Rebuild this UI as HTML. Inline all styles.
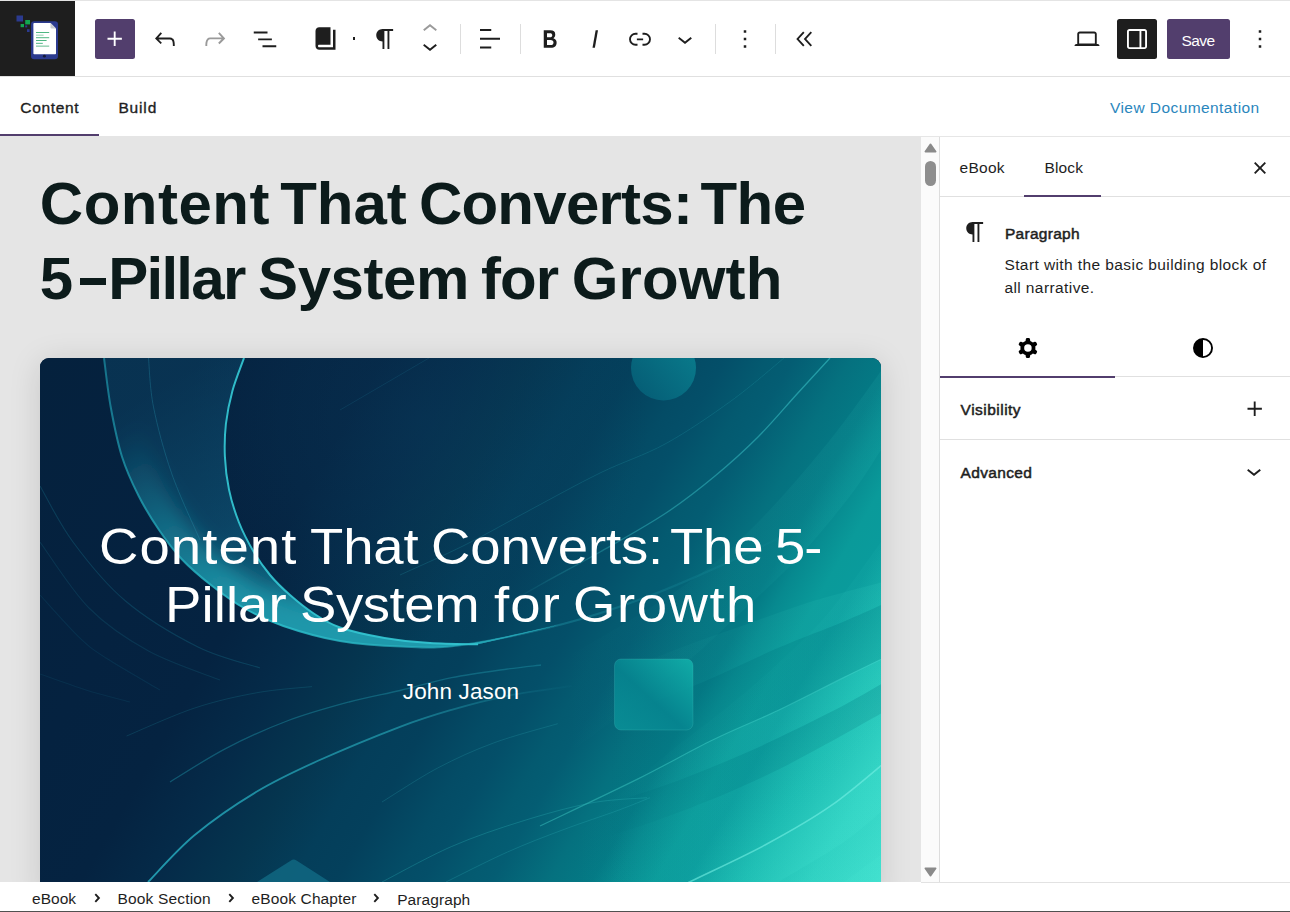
<!DOCTYPE html>
<html lang="en">
<head>
<meta charset="utf-8">
<title>eBook Editor</title>
<style>
*{box-sizing:border-box;margin:0;padding:0}
html,body{width:1290px;height:912px;overflow:hidden;background:#fff;font-family:"Liberation Sans",sans-serif;color:#1e1e1e}
.abs{position:absolute}
.t{position:absolute;white-space:nowrap;line-height:1;font-size:15.5px;color:#1e1e1e}
svg{position:absolute;display:block;overflow:visible}
.ic{width:30px;height:30px;fill:#1e1e1e}
.sep{position:absolute;top:24px;width:1px;height:30px;background:#ddd}

/* header */
#topline{left:0;top:0;width:1290px;height:1px;background:#e4e4e4}
#logo{left:0;top:1px;width:75px;height:75px;background:#1e1e1e}
#hborder{left:0;top:76px;width:1290px;height:1px;background:#e0e0e0}
#add{left:95px;top:19px;width:40px;height:40px;border-radius:2.5px;background:#523e6d}
#sbtn{left:1117px;top:19px;width:40px;height:40px;border-radius:2.5px;background:#1e1e1e}
#save{left:1167px;top:19px;width:63px;height:40px;border-radius:2.5px;background:#523e6d}

/* tabs row */
#tabline{left:0;top:133.800px;width:99px;height:2.400px;background:#523e6d}

/* canvas */
#canvas{left:0;top:136px;width:921px;height:746px;background:#e5e5e5;overflow:hidden}
#sideTop{left:921px;top:136px;width:369px;height:1px;background:#e6e6e6}
#scroll{left:921px;top:137px;width:18px;height:745px;background:#fbfbfb}
#sborder{left:939px;top:137px;width:1px;height:745px;background:#ddd}

/* bottom */
#bottom{left:0;top:882px;width:1290px;height:30px;background:#fff}
#bline{left:0;top:910.8px;width:1290px;height:1.2px;background:#505050}
#btop{left:921px;top:882px;width:369px;height:1px;background:#e2e2e2}
</style>
</head>
<body>

<!-- ============ HEADER ============ -->
<div class="abs" id="topline"></div>
<div class="abs" id="logo"></div>
<div class="abs" id="hborder"></div>
<div class="abs" id="add"></div>
<div class="abs" id="sbtn"></div>
<div class="abs" id="save"></div>

<!-- logo -->
<svg style="left:0;top:1px" width="75" height="75" viewBox="0 0 75 75">
  <rect x="16.5" y="14.5" width="6.5" height="6" fill="#2b3a8f"/>
  <rect x="25.2" y="19" width="4.8" height="4.4" fill="#12a650"/>
  <rect x="20.6" y="23" width="3.4" height="3.2" fill="#12a650"/>
  <rect x="25.2" y="24.4" width="2" height="2" fill="#2b3a8f"/>
  <rect x="27" y="28.2" width="2.6" height="2.8" fill="#2b3a8f"/>
  <rect x="31" y="20.3" width="27" height="38" rx="3.2" fill="#2b3a8f"/>
  <path d="M34.2 22h16.3l5.5 5.5v24.9a.8.8 0 0 1-.8.8H34.2a.8.8 0 0 1-.8-.8V22.8a.8.8 0 0 1 .8-.8z" fill="#fff"/>
  <path d="M50.5 22l5.5 5.5h-4.3a1.2 1.2 0 0 1-1.2-1.2z" fill="#c9ccd1"/>
  <rect x="36" y="31" width="13.2" height="1" fill="#4fb783"/>
  <rect x="36" y="33.6" width="7.6" height="1.2" fill="#a9d9c0"/>
  <rect x="36" y="36.2" width="13.2" height="1" fill="#4fb783"/>
  <rect x="36" y="39" width="10.6" height="1" fill="#4fb783"/>
  <rect x="36" y="41.8" width="6.8" height="1.2" fill="#6cc29a"/>
  <rect x="36" y="44.4" width="13.2" height="1.6" fill="#9fd5b9"/>
  <ellipse cx="44.400" cy="55.200" rx="1.500" ry="1.400" fill="#151a3a"/>
</svg>

<!-- inserter plus -->
<svg class="ic" style="left:100px;top:24px;fill:#fff" viewBox="0 0 24 24"><path d="M11 12.5V17.5H12.5V12.5H17.5V11H12.5V6H11V11H6V12.5H11Z"/></svg>
<!-- undo -->
<svg class="ic" style="left:150px;top:24px" viewBox="0 0 24 24"><path d="M18.3 11.7c-.6-.6-1.4-.9-2.3-.9H6.7l2.900-3.300-1.100-1-4.500 5L8.500 16l1-1-2.700-2.700H16c.5 0 .9.2 1.300.5 1 1 1 3.400 1 4.500v.3h1.500v-.2c0-1.500 0-4.300-1.400-5.700z"/></svg>
<!-- redo -->
<svg class="ic" style="left:200px;top:24px;fill:#9a9a9a" viewBox="0 0 24 24"><path d="M15.600 6.500l-1.100 1 2.900 3.300H8c-.9 0-1.700.3-2.300.9-1.400 1.500-1.400 4.200-1.400 5.600v.2h1.500v-.3c0-1.100 0-3.500 1-4.500.3-.3.700-.5 1.300-.5h9.200L14.500 15l1.100 1.100 4.600-4.600-4.600-5z"/></svg>
<!-- list view -->
<svg class="ic" style="left:250px;top:24px" viewBox="0 0 24 24"><path d="M3 6h11v1.500H3V6Zm3.500 5.500h11V13h-11v-1.500ZM21 17H10v1.500h11V17Z"/></svg>
<!-- book (dashicon) -->
<svg style="left:312.500px;top:25.500px;fill:#1e1e1e" width="25" height="25" viewBox="0 0 20 20"><path d="M16 3h2v16H5c-1.660 0-3-1.340-3-3V4c0-1.660 1.340-3 3-3h9v14H5c-.550 0-1 .450-1 1s.450 1 1 1h11V3z"/></svg>
<div class="abs" style="left:353px;top:37px;width:2px;height:3px;background:#1e1e1e"></div>
<!-- pilcrow -->
<svg class="ic" style="left:369.500px;top:24px" viewBox="0 0 24 24"><path d="m9.996 14v-.225l.004 0v6.225h1.500v-14.500h2.500v14.500h1.500v-14.500h3v-1.500h-8.504c-2.761 0-5 2.239-5 5 0 2.761 2.239 5 5 5z"/></svg>
<!-- movers -->
<svg class="ic" style="left:415px;top:14.300px;fill:#9a9a9a" viewBox="0 0 24 24"><path d="M6.500 12.400L12 8l5.500 4.400-.9 1.200L12 10l-4.500 3.600-1-1.200z"/></svg>
<svg class="ic" style="left:415px;top:31.200px" viewBox="0 0 24 24"><path d="M17.500 11.600L12 16l-5.500-4.400.9-1.200L12 14l4.500-3.600 1 1.200z"/></svg>
<div class="sep" style="left:460px"></div>
<!-- align left -->
<svg class="ic" style="left:475px;top:24px" viewBox="0 0 24 24"><path d="M13 5.500H4V4h9v1.500Zm7 7H4V11h16v1.500Zm-7 7H4V18h9v1.500Z"/></svg>
<div class="sep" style="left:520px"></div>
<!-- bold -->
<svg class="ic" style="left:534.500px;top:24px" viewBox="0 0 24 24"><path d="M14.700 11.300c1-.6 1.500-1.600 1.500-3 0-2.300-1.300-3.400-4-3.400H7v14h5.800c1.400 0 2.500-.3 3.300-1 .8-.7 1.200-1.700 1.200-2.900.1-1.900-.8-3.100-2.600-3.700zm-5.100-4h2.300c.6 0 1.100.1 1.400.4.300.3.500.7.500 1.200s-.2 1-.5 1.200c-.3.3-.8.400-1.400.4H9.600V7.300zm4.600 9c-.4.300-1 .4-1.700.4H9.600v-3.900h2.900c.7 0 1.300.2 1.700.5.400.3.600.9.600 1.500s-.2 1.200-.6 1.500z"/></svg>
<!-- italic -->
<svg class="ic" style="left:579.700px;top:24px" viewBox="0 0 24 24"><path d="M12.500 5L10 19h1.900l2.500-14z"/></svg>
<!-- link -->
<svg class="ic" style="left:624.800px;top:24px" viewBox="0 0 24 24"><path d="M10 17.389H8.444A5.194 5.194 0 1 1 8.444 7H10v1.500H8.444a3.694 3.694 0 0 0 0 7.389H10v1.500ZM14 7h1.556a5.194 5.194 0 0 1 0 10.390H14v-1.500h1.556a3.694 3.694 0 0 0 0-7.390H14V7Zm-4.500 6h5v-1.500h-5V13Z"/></svg>
<!-- chevron down -->
<svg class="ic" style="left:669.900px;top:23.800px" viewBox="0 0 24 24"><path d="M17.500 11.600L12 16l-5.500-4.400.9-1.200L12 14l4.500-3.600 1 1.200z"/></svg>
<div class="sep" style="left:715px"></div>
<!-- more -->
<svg class="ic" style="left:729.700px;top:24px" viewBox="0 0 24 24"><path d="M13 19h-2v-2h2v2zm0-6h-2v-2h2v2zm0-6h-2V5h2v2z"/></svg>
<div class="sep" style="left:775px"></div>
<!-- collapse -->
<svg class="ic" style="left:790px;top:24px" viewBox="0 0 24 24"><path d="M11.600 7l-1.100-1L5 12l5.500 6 1.100-1L7 12l4.600-5zm6 0l-1.100-1-5.500 6 5.500 6 1.100-1-4.600-5 4.600-5z"/></svg>

<!-- laptop -->
<svg class="ic" style="left:1072.400px;top:24px" viewBox="0 0 24 24"><path d="M20.500 16h-.7V8c0-1.100-.9-2-2-2H6.200c-1.100 0-2 .9-2 2v8h-.7c-.8 0-1.500.7-1.500 1.500h20c0-.8-.7-1.500-1.500-1.500zM5.700 8c0-.3.200-.5.500-.5h11.600c.3 0 .5.200.5.500v7.600H5.700V8z"/></svg>
<!-- drawer right -->
<svg class="ic" style="left:1122px;top:24px;fill:#fff" viewBox="0 0 24 24"><path d="M18 4H6c-1.100 0-2 .9-2 2v12c0 1.100.9 2 2 2h12c1.100 0 2-.9 2-2V6c0-1.100-.9-2-2-2zm-4 14.500H6c-.3 0-.5-.2-.5-.5V6c0-.3.200-.5.500-.5h8v13zm4.500-.5c0 .3-.2.5-.5.5h-2.500V5.500H18c.3 0 .5.200.5.500v12z"/></svg>
<span class="t" id="tSave" style="left:1181.4px;top:32.8px;color:#fff;letter-spacing:-.5px">Save</span>
<svg class="ic" style="left:1245px;top:24px" viewBox="0 0 24 24"><path d="M13 19h-2v-2h2v2zm0-6h-2v-2h2v2zm0-6h-2V5h2v2z"/></svg>

<!-- ============ TABS ============ -->
<div class="abs" id="tabline"></div>

<span class="t" id="tContent" style="left:20.3px;top:99.8px;letter-spacing:.68px;-webkit-text-stroke:.35px #1e1e1e">Content</span>
<span class="t" id="tBuild" style="left:118.4px;top:99.8px;letter-spacing:.85px;-webkit-text-stroke:.35px #1e1e1e">Build</span>
<span class="t" id="tDoc" style="left:1110px;top:99.5px;letter-spacing:.43px;color:#2a86bd">View Documentation</span>

<!-- ============ CANVAS ============ -->
<div class="abs" id="canvas">
  <span class="t" id="h1a0" style="left:39.8px;top:38.300px;font-size:60px;font-weight:700;color:#0c1b1b;letter-spacing:0.5px">Content</span>
  <span class="t" id="h1a1" style="left:280.2px;top:38.300px;font-size:60px;font-weight:700;color:#0c1b1b;letter-spacing:-0.03px">That</span>
  <span class="t" id="h1a2" style="left:418.9px;top:38.300px;font-size:60px;font-weight:700;color:#0c1b1b;letter-spacing:-0.75px">Converts:</span>
  <span class="t" id="h1a3" style="left:700.5px;top:38.300px;font-size:60px;font-weight:700;color:#0c1b1b;letter-spacing:-0.55px">The</span>
  <span class="t" id="h1b0" style="left:39.8px;top:112.600px;font-size:60px;font-weight:700;color:#0c1b1b;letter-spacing:0px">5</span>
  <span class="t" id="h1b1" style="left:108.2px;top:112.600px;font-size:60px;font-weight:700;color:#0c1b1b;letter-spacing:-1.74px">Pillar</span>
  <span class="t" id="h1b2" style="left:258.1px;top:112.600px;font-size:60px;font-weight:700;color:#0c1b1b;letter-spacing:-0.46px">System</span>
  <span class="t" id="h1b3" style="left:480.9px;top:112.600px;font-size:60px;font-weight:700;color:#0c1b1b;letter-spacing:-0.85px">for</span>
  <span class="t" id="h1b4" style="left:571.7px;top:112.600px;font-size:60px;font-weight:700;color:#0c1b1b;letter-spacing:0.14px">Growth</span>
  <div class="abs" style="left:79.600px;top:142.400px;width:26.400px;height:7px;background:#0c1b1b"></div>
  <div class="abs" id="cover" style="left:40px;top:222px;width:841px;height:540px;border-radius:9px 9px 0 0;overflow:hidden;background:#05213d;box-shadow:0 4px 32px rgba(0,0,0,.13)">
    <svg id="art" width="841" height="540" viewBox="0 0 841 540" style="left:0;top:0"><defs>
<linearGradient id="bg" gradientUnits="userSpaceOnUse" x1="40" y1="358" x2="897" y2="853"><stop offset="0" stop-color="#05213d"/><stop offset="0.2" stop-color="#052240"/><stop offset="0.3" stop-color="#052341"/><stop offset="0.37" stop-color="#052b49"/><stop offset="0.43" stop-color="#05354f"/><stop offset="0.485" stop-color="#043e5a"/><stop offset="0.523" stop-color="#04405c"/><stop offset="0.574" stop-color="#044c66"/><stop offset="0.6" stop-color="#044f69"/><stop offset="0.637" stop-color="#045a70"/><stop offset="0.66" stop-color="#045d73"/><stop offset="0.71" stop-color="#05717f"/><stop offset="0.747" stop-color="#047a85"/><stop offset="0.768" stop-color="#07898f"/><stop offset="0.802" stop-color="#0a9a9a"/><stop offset="0.83" stop-color="#0a9b9c"/><stop offset="0.88" stop-color="#19b8af"/><stop offset="0.938" stop-color="#2fd0c1"/><stop offset="0.99" stop-color="#3ddccb"/><stop offset="1" stop-color="#40dfcd"/></linearGradient>
<linearGradient id="cres" gradientUnits="userSpaceOnUse" x1="170" y1="380" x2="330" y2="640">
<stop offset="0" stop-color="#0d4a6c" stop-opacity=".42"/><stop offset=".5" stop-color="#0f5a7c" stop-opacity=".6"/>
<stop offset=".72" stop-color="#12708c" stop-opacity=".7"/><stop offset=".88" stop-color="#178aa0" stop-opacity=".9"/><stop offset="1" stop-color="#1c96aa" stop-opacity=".95"/>
</linearGradient>
<linearGradient id="outl" gradientUnits="userSpaceOnUse" x1="104" y1="358" x2="800" y2="560">
<stop offset="0" stop-color="#1a8aa0" stop-opacity=".75"/><stop offset=".3" stop-color="#2bbcc9" stop-opacity=".95"/><stop offset=".5" stop-color="#2ab4c2" stop-opacity=".7"/>
<stop offset=".7" stop-color="#2ab4c2" stop-opacity=".3"/><stop offset="1" stop-color="#2ab4c2" stop-opacity="0"/>
</linearGradient>
<linearGradient id="fade" gradientUnits="userSpaceOnUse" x1="560" y1="0" x2="881" y2="0">
<stop offset="0" stop-color="#3fe0d0" stop-opacity="0"/><stop offset="1" stop-color="#3fe0d0" stop-opacity="1"/>
</linearGradient>
<linearGradient id="fadeD" gradientUnits="userSpaceOnUse" x1="600" y1="0" x2="881" y2="0">
<stop offset="0" stop-color="#024a5e" stop-opacity="0"/><stop offset="1" stop-color="#024a5e" stop-opacity="1"/>
</linearGradient>
<linearGradient id="fadeS" gradientUnits="userSpaceOnUse" x1="600" y1="0" x2="881" y2="0">
<stop offset="0" stop-color="#4aead6" stop-opacity="0"/><stop offset="1" stop-color="#4aead6" stop-opacity="1"/>
</linearGradient>
<linearGradient id="glow" gradientUnits="userSpaceOnUse" x1="120" y1="440" x2="300" y2="640">
<stop offset="0" stop-color="#1c94a8" stop-opacity="0"/><stop offset=".35" stop-color="#1c94a8" stop-opacity=".5"/><stop offset=".7" stop-color="#1e9aad" stop-opacity=".85"/><stop offset="1" stop-color="#1e9aad" stop-opacity=".85"/>
</linearGradient>
<filter id="bl" x="-20%" y="-20%" width="140%" height="140%"><feGaussianBlur stdDeviation="10"/></filter>
<linearGradient id="e2g" gradientUnits="userSpaceOnUse" x1="830" y1="0" x2="500" y2="0">
<stop offset="0" stop-color="#3cc8cc" stop-opacity=".55"/><stop offset=".6" stop-color="#3cc8cc" stop-opacity=".4"/><stop offset="1" stop-color="#3cc8cc" stop-opacity="0"/>
</linearGradient>
<radialGradient id="hub" gradientUnits="userSpaceOnUse" cx="420" cy="420" r="230">
<stop offset="0" stop-color="#0a3c5e" stop-opacity=".4"/><stop offset=".6" stop-color="#0a3c5e" stop-opacity=".2"/><stop offset="1" stop-color="#0a3c5e" stop-opacity="0"/>
</radialGradient>
<linearGradient id="sq" x1="1" y1="0" x2="0" y2="1">
<stop offset="0" stop-color="#12b4ad"/><stop offset=".55" stop-color="#068691"/><stop offset="1" stop-color="#0a9299"/>
</linearGradient>
<linearGradient id="circ" x1="1" y1="0" x2="0" y2="1">
<stop offset="0" stop-color="#0b8c99"/><stop offset="1" stop-color="#055f78"/>
</linearGradient>
<linearGradient id="l1" gradientUnits="userSpaceOnUse" x1="148" y1="882" x2="580" y2="686">
<stop offset="0" stop-color="#2198ad"/><stop offset=".6" stop-color="#1f93a6" stop-opacity=".8"/><stop offset="1" stop-color="#1f93a6" stop-opacity="0"/>
</linearGradient>
</defs><g transform="translate(-40,-358)"><rect x="40" y="358" width="841" height="540" fill="url(#bg)"/>
<rect x="40" y="358" width="841" height="540" fill="url(#hub)"/>
<path d="M890.0 358.0C888.5 360.2 891.0 357.3 881.0 371.0C871.0 384.7 849.5 415.8 830.0 440.0C810.5 464.2 785.8 493.5 764.0 516.0C742.2 538.5 726.3 554.7 699.0 575.0C671.7 595.3 629.8 620.5 600.0 638.0C570.2 655.5 546.7 666.3 520.0 680.0C493.3 693.7 453.3 713.3 440.0 720.0L560.0 760.0C573.3 750.0 618.0 717.0 640.0 700.0C662.0 683.0 676.7 671.2 692.0 658.0C707.3 644.8 714.1 637.5 731.6 621.0C749.1 604.5 777.3 579.8 797.0 559.0C816.7 538.2 836.0 514.2 850.0 496.0C864.0 477.8 874.3 460.0 881.0 450.0C887.7 440.0 888.5 438.3 890.0 436.0Z" fill="url(#fade)" fill-opacity="0.08"/>
<path d="M890.0 528.0C888.5 530.3 891.0 528.2 881.0 542.0C871.0 555.8 846.2 591.7 830.0 611.0C813.8 630.3 800.7 642.3 784.0 658.0C767.3 673.7 750.7 688.0 730.0 705.0C709.3 722.0 683.3 740.5 660.0 760.0C636.7 779.5 613.3 799.5 590.0 822.0C566.7 844.5 531.7 882.8 520.0 895.0L520.0 900.0C583.3 900.0 836.7 960.0 900.0 900.0C963.3 840.0 900.0 600.0 900.0 540.0Z" fill="url(#fade)" fill-opacity="0.05"/>
<path d="M784.0 358.0C775.2 365.2 750.7 386.8 731.0 401.0C711.3 415.2 687.8 431.5 666.0 443.5C644.2 455.5 622.7 461.9 600.0 473.0C577.3 484.1 552.5 498.0 530.0 510.0C507.5 522.0 486.7 534.2 465.0 545.0C443.3 555.8 410.8 570.0 400.0 575.0" fill="none" stroke="#2aa5b0" stroke-width="1" stroke-opacity=".22"/>
<path d="M830.0 358.0C824.5 364.0 809.0 380.8 797.0 394.0C785.0 407.2 771.7 423.3 758.0 437.0C744.3 450.7 730.3 463.3 715.0 476.0C699.7 488.7 685.2 500.3 666.0 513.0C646.8 525.7 621.0 540.0 600.0 552.0C579.0 564.0 561.7 572.8 540.0 585.0C518.3 597.2 481.7 618.3 470.0 625.0" fill="none" stroke="url(#e2g)" stroke-width="1.3"/>
<path d="M600.0 680.0C613.3 674.7 655.8 657.2 680.0 648.0C704.2 638.8 723.7 632.5 745.5 624.8C767.3 617.1 786.9 609.2 811.0 601.7C835.1 594.2 876.8 583.6 890.0 580.0L890.0 601.0C882.3 604.4 862.6 613.7 844.0 621.5C825.4 629.3 801.4 637.9 778.4 647.8C755.4 657.7 729.1 670.7 706.0 680.7C682.9 690.7 664.3 697.3 640.0 708.0C615.7 718.7 573.3 738.8 560.0 745.0Z" fill="url(#fadeS)" fill-opacity="0.1"/>
<path d="M540.0 826.0C556.2 818.2 608.2 793.7 637.0 779.4C665.8 765.1 689.0 751.5 712.6 740.0C736.2 728.5 756.5 720.7 778.4 710.3C800.3 699.9 825.4 686.6 844.0 677.4C862.6 668.2 882.3 658.7 890.0 655.0L890.0 679.0C879.6 684.8 851.8 701.3 827.7 713.6C803.6 725.9 773.0 740.9 745.5 753.0C718.0 765.1 690.4 776.2 663.0 786.0C635.6 795.8 604.8 804.3 581.0 812.0C557.2 819.7 543.5 825.2 520.0 832.0C496.5 838.8 453.3 849.5 440.0 853.0Z" fill="url(#fadeS)" fill-opacity="0.16"/>
<path d="M480.0 875.0C496.8 870.0 547.7 855.5 581.0 845.0C614.3 834.5 646.8 824.6 679.7 812.0C712.6 799.4 743.4 786.8 778.4 769.5C813.4 752.2 871.4 718.7 890.0 708.5L890.0 758.0C880.2 766.0 851.8 791.2 831.0 805.7C810.2 820.2 788.6 832.3 765.0 845.0C741.4 857.7 704.3 874.5 689.5 882.0C674.7 889.5 678.2 888.7 676.0 890.0Z" fill="url(#fadeS)" fill-opacity="0.1"/>
<path d="M676.0 890.0C678.2 888.7 674.7 889.5 689.5 882.0C704.3 874.5 741.4 857.7 765.0 845.0C788.6 832.3 810.2 820.2 831.0 805.7C851.8 791.2 880.2 766.0 890.0 758.0L890.0 804.0C882.3 810.3 862.6 829.0 844.0 842.0C825.4 855.0 791.4 874.0 778.4 882.0C765.4 890.0 768.1 888.7 766.0 890.0Z" fill="url(#fadeS)" fill-opacity="0.22"/>
<path d="M766.0 890.0C768.1 888.7 765.4 890.0 778.4 882.0C791.4 874.0 825.4 855.0 844.0 842.0C862.6 829.0 882.3 810.3 890.0 804.0L890.0 848.0C882.3 853.7 853.3 875.0 844.0 882.0C834.7 889.0 835.7 888.7 834.0 890.0Z" fill="url(#fadeS)" fill-opacity="0.06"/>
<path d="M834.0 890.0C835.7 888.7 834.7 889.0 844.0 882.0C853.3 875.0 882.3 853.7 890.0 848.0L900.0 848.0C900.0 856.7 911.0 891.3 900.0 900.0C889.0 908.7 845.0 900.0 834.0 900.0Z" fill="url(#fadeS)" fill-opacity="0.18"/>
<path d="M560.0 745.0C573.3 738.8 615.7 718.7 640.0 708.0C664.3 697.3 682.9 690.7 706.0 680.7C729.1 670.7 755.4 657.7 778.4 647.8C801.4 637.9 825.4 629.3 844.0 621.5C862.6 613.7 882.3 604.4 890.0 601.0L890.0 655.0C882.3 658.7 862.6 668.2 844.0 677.4C825.4 686.6 800.3 699.9 778.4 710.3C756.5 720.7 736.2 728.5 712.6 740.0C689.0 751.5 665.8 765.1 637.0 779.4C608.2 793.7 556.2 818.2 540.0 826.0Z" fill="url(#fadeD)" fill-opacity="0.1"/>
<path d="M440.0 853.0C453.3 849.5 496.5 838.8 520.0 832.0C543.5 825.2 557.2 819.7 581.0 812.0C604.8 804.3 635.6 795.8 663.0 786.0C690.4 776.2 718.0 765.1 745.5 753.0C773.0 740.9 803.6 725.9 827.7 713.6C851.8 701.3 879.6 684.8 890.0 679.0L890.0 708.5C871.4 718.7 813.4 752.2 778.4 769.5C743.4 786.8 712.6 799.4 679.7 812.0C646.8 824.6 614.3 834.5 581.0 845.0C547.7 855.5 496.8 870.0 480.0 875.0Z" fill="url(#fadeD)" fill-opacity="0.12"/>
<path d="M540.0 826.0C556.2 818.2 608.2 793.7 637.0 779.4C665.8 765.1 689.0 751.5 712.6 740.0C736.2 728.5 756.5 720.7 778.4 710.3C800.3 699.9 825.4 686.6 844.0 677.4C862.6 668.2 882.3 658.7 890.0 655.0" fill="none" stroke="#4adcd2" stroke-width="1.2" stroke-opacity=".4"/>
<path d="M676.0 890.0C678.2 888.7 674.7 889.5 689.5 882.0C704.3 874.5 741.4 857.7 765.0 845.0C788.6 832.3 810.2 820.2 831.0 805.7C851.8 791.2 880.2 766.0 890.0 758.0" fill="none" stroke="#74f0e4" stroke-width="1.6" stroke-opacity=".6"/>
<clipPath id="cc"><path d="M104.0 358.0C105.1 366.2 107.7 390.6 110.7 407.0C113.7 423.4 117.3 441.9 122.0 456.7C126.7 471.5 132.6 483.9 138.7 496.0C144.8 508.1 151.3 518.5 158.4 529.0C165.5 539.5 172.6 549.4 181.4 558.7C190.2 568.0 200.6 576.8 211.0 585.0C221.4 593.2 231.9 601.2 244.0 608.0C256.1 614.8 267.4 620.5 283.4 626.0C299.4 631.5 320.2 637.6 340.0 641.0C359.8 644.4 381.7 645.8 402.0 646.5C422.3 647.2 435.2 648.8 462.0 645.0C488.8 641.2 546.2 627.5 563.0 624.0L478.0 644.3C470.0 644.1 445.6 644.0 430.0 643.0C414.4 642.0 399.5 640.6 384.5 638.0C369.5 635.4 351.9 631.7 340.0 627.5C328.1 623.3 321.3 618.4 313.0 613.0C304.7 607.6 297.2 601.3 290.0 595.0C282.8 588.7 276.0 582.2 270.0 575.0C264.0 567.8 259.0 560.8 253.8 552.0C248.6 543.2 243.1 532.9 239.0 522.5C234.9 512.1 231.3 500.6 229.0 489.6C226.7 478.6 225.4 467.7 224.9 456.7C224.4 445.7 224.7 434.8 225.9 423.8C227.2 412.9 229.4 402.0 232.4 391.0C235.4 380.0 242.1 363.5 244.0 358.0Z"/></clipPath>
<path d="M104.0 358.0C105.1 366.2 107.7 390.6 110.7 407.0C113.7 423.4 117.3 441.9 122.0 456.7C126.7 471.5 132.6 483.9 138.7 496.0C144.8 508.1 151.3 518.5 158.4 529.0C165.5 539.5 172.6 549.4 181.4 558.7C190.2 568.0 200.6 576.8 211.0 585.0C221.4 593.2 231.9 601.2 244.0 608.0C256.1 614.8 267.4 620.5 283.4 626.0C299.4 631.5 320.2 637.6 340.0 641.0C359.8 644.4 381.7 645.8 402.0 646.5C422.3 647.2 435.2 648.8 462.0 645.0C488.8 641.2 546.2 627.5 563.0 624.0L478.0 644.3C470.0 644.1 445.6 644.0 430.0 643.0C414.4 642.0 399.5 640.6 384.5 638.0C369.5 635.4 351.9 631.7 340.0 627.5C328.1 623.3 321.3 618.4 313.0 613.0C304.7 607.6 297.2 601.3 290.0 595.0C282.8 588.7 276.0 582.2 270.0 575.0C264.0 567.8 259.0 560.8 253.8 552.0C248.6 543.2 243.1 532.9 239.0 522.5C234.9 512.1 231.3 500.6 229.0 489.6C226.7 478.6 225.4 467.7 224.9 456.7C224.4 445.7 224.7 434.8 225.9 423.8C227.2 412.9 229.4 402.0 232.4 391.0C235.4 380.0 242.1 363.5 244.0 358.0Z" fill="url(#cres)"/>
<g clip-path="url(#cc)"><path d="M104.0 358.0C105.1 366.2 107.7 390.6 110.7 407.0C113.7 423.4 117.3 441.9 122.0 456.7C126.7 471.5 132.6 483.9 138.7 496.0C144.8 508.1 151.3 518.5 158.4 529.0C165.5 539.5 172.6 549.4 181.4 558.7C190.2 568.0 200.6 576.8 211.0 585.0C221.4 593.2 231.9 601.2 244.0 608.0C256.1 614.8 267.4 620.5 283.4 626.0C299.4 631.5 320.2 637.6 340.0 641.0C359.8 644.4 381.7 645.8 402.0 646.5C422.3 647.2 435.2 648.8 462.0 645.0C488.8 641.2 546.2 627.5 563.0 624.0" fill="none" stroke="url(#glow)" stroke-width="54" filter="url(#bl)"/></g>
<path d="M104.0 358.0C105.1 366.2 107.7 390.6 110.7 407.0C113.7 423.4 117.3 441.9 122.0 456.7C126.7 471.5 132.6 483.9 138.7 496.0C144.8 508.1 151.3 518.5 158.4 529.0C165.5 539.5 172.6 549.4 181.4 558.7C190.2 568.0 200.6 576.8 211.0 585.0C221.4 593.2 231.9 601.2 244.0 608.0C256.1 614.8 267.4 620.5 283.4 626.0C299.4 631.5 320.2 637.6 340.0 641.0C359.8 644.4 381.7 645.8 402.0 646.5C422.3 647.2 435.2 648.8 462.0 645.0C488.8 641.2 532.7 631.8 563.0 624.0C593.3 616.2 617.8 607.7 644.0 598.0C670.2 588.3 694.0 577.7 720.0 566.0C746.0 554.3 786.7 534.3 800.0 528.0" fill="none" stroke="url(#outl)" stroke-width="2"/>
<path d="M244.0 358.0C242.1 363.5 235.4 380.0 232.4 391.0C229.4 402.0 227.2 412.9 225.9 423.8C224.7 434.8 224.4 445.7 224.9 456.7C225.4 467.7 226.7 478.6 229.0 489.6C231.3 500.6 234.9 512.1 239.0 522.5C243.1 532.9 248.6 543.2 253.8 552.0C259.0 560.8 264.0 567.8 270.0 575.0C276.0 582.2 282.8 588.7 290.0 595.0C297.2 601.3 304.7 607.6 313.0 613.0C321.3 618.4 328.1 623.3 340.0 627.5C351.9 631.7 369.5 635.4 384.5 638.0C399.5 640.6 414.4 642.0 430.0 643.0C445.6 644.0 470.0 644.1 478.0 644.3" fill="none" stroke="#33c3d0" stroke-width="2" stroke-opacity=".95"/>
<path d="M148.5 358.0C149.3 366.2 149.7 387.8 153.5 407.0C157.3 426.2 163.8 450.8 171.5 473.0C179.2 495.2 195.2 528.8 200.0 540.0" fill="none" stroke="#2a9db5" stroke-width="1" stroke-opacity=".3"/>
<path d="M40.0 486.0C45.5 495.3 58.8 522.8 73.0 542.0C87.2 561.2 104.7 583.5 125.5 601.0C146.3 618.5 175.6 635.8 198.0 647.0C220.4 658.2 249.7 664.5 260.0 668.0" fill="none" stroke="#1f8aa3" stroke-width="1.1" stroke-opacity="0.26"/>
<path d="M40.0 542.0C48.2 553.0 70.9 589.8 89.0 608.0C107.1 626.2 126.7 639.0 148.5 651.0C170.3 663.0 208.1 675.2 220.0 680.0" fill="none" stroke="#1f8aa3" stroke-width="1.1" stroke-opacity="0.18"/>
<path d="M40.0 595.0C46.6 602.1 68.5 627.1 79.5 637.6C90.5 648.1 92.6 649.3 106.0 658.0C119.4 666.7 151.0 684.7 160.0 690.0" fill="none" stroke="#1f8aa3" stroke-width="1.1" stroke-opacity="0.14"/>
<path d="M40.0 674.0C47.7 676.7 71.0 685.3 86.0 690.0C101.0 694.7 122.7 700.0 130.0 702.0" fill="none" stroke="#1f8aa3" stroke-width="1.1" stroke-opacity="0.12"/>
<path d="M148.0 882.0C155.8 874.2 176.6 850.0 194.7 835.0C212.8 820.0 235.9 804.2 256.5 791.8C277.1 779.4 294.1 771.6 318.0 760.8C341.9 750.0 377.7 735.3 400.0 726.8C422.3 718.3 433.7 715.0 451.6 709.8C469.5 704.6 487.5 699.8 507.5 695.8C527.5 691.8 560.9 687.6 571.6 686.0" fill="none" stroke="url(#l1)" stroke-width="1.8"/>
<path d="M170.0 782.0C179.3 776.4 206.1 758.8 225.6 748.6C245.1 738.4 266.4 728.8 287.0 721.0C307.6 713.2 330.2 707.1 349.0 702.0C367.8 696.9 382.9 694.5 400.0 690.5C417.1 686.5 433.7 681.3 451.6 677.7C469.5 674.1 492.6 671.1 507.5 669.0C522.4 666.9 535.4 665.7 541.0 665.0" fill="none" stroke="#1f93a6" stroke-width="1.3" stroke-opacity=".45"/>
<path d="M126.6 736.0C137.9 731.3 173.0 715.2 194.7 708.0C216.3 700.8 236.9 696.4 256.5 692.8C276.1 689.2 302.8 687.6 312.0 686.6" fill="none" stroke="#1f93a6" stroke-width="1" stroke-opacity=".22"/>
<path d="M382.0 802.0C391.3 796.3 419.1 777.8 437.7 768.0C456.3 758.2 473.5 750.4 493.5 743.0C513.5 735.6 547.0 726.9 557.7 723.7" fill="none" stroke="#2aa5b0" stroke-width="1" stroke-opacity=".25"/>
<path d="M382.0 882.0C393.6 876.1 428.4 856.6 451.6 846.5C474.8 836.4 498.2 828.6 521.4 821.4C544.6 814.1 570.1 807.0 591.0 803.0C611.9 799.0 637.7 798.6 647.0 797.7" fill="none" stroke="#2fb5bb" stroke-width="1" stroke-opacity=".3"/>
<path d="M446.0 882.0C456.2 877.0 488.0 860.7 507.5 852.0C527.0 843.3 544.4 836.8 563.0 829.8C581.6 822.8 604.5 815.4 619.0 810.0C633.5 804.6 644.8 799.8 650.0 797.7" fill="none" stroke="#2fb5bb" stroke-width="1" stroke-opacity=".25"/>
<path d="M340 410L429 358" fill="none" stroke="#2a9db5" stroke-width="1" stroke-opacity=".15"/>
<circle cx="663.5" cy="368" r="32.5" fill="url(#circ)" fill-opacity=".8"/>
<rect x="614.5" y="659" width="78.5" height="71" rx="6.5" fill="url(#sq)" fill-opacity=".85" stroke="#5fe0d6" stroke-opacity=".18" stroke-width="1"/>
<path d="M291 860.500L257 882H330L296.500 860.500Q293.600 858.500 291 860.500Z" fill="#12708a" fill-opacity=".7"/></g></svg>
    <span class="t" id="cw0" style="left:59.0px;top:164px;font-size:50px;letter-spacing:0.98px;color:#fff;transform:scaleX(1.09);transform-origin:0 0">Content</span>
    <span class="t" id="cw1" style="left:269.8px;top:164px;font-size:50px;letter-spacing:-0.13px;color:#fff;transform:scaleX(1.09);transform-origin:0 0">That</span>
    <span class="t" id="cw2" style="left:390.9px;top:164px;font-size:50px;letter-spacing:-0.12px;color:#fff;transform:scaleX(1.09);transform-origin:0 0">Converts:</span>
    <span class="t" id="cw3" style="left:630.4px;top:164px;font-size:50px;letter-spacing:-0.17px;color:#fff;transform:scaleX(1.09);transform-origin:0 0">The</span>
    <span class="t" id="cw4" style="left:735.3px;top:164px;font-size:50px;letter-spacing:-1.01px;color:#fff;transform:scaleX(1.09);transform-origin:0 0">5-</span>
    <span class="t" id="cw5" style="left:125.4px;top:221.6px;font-size:50px;letter-spacing:0.1px;color:#fff;transform:scaleX(1.09);transform-origin:0 0">Pillar</span>
    <span class="t" id="cw6" style="left:260.4px;top:221.6px;font-size:50px;letter-spacing:-0.38px;color:#fff;transform:scaleX(1.09);transform-origin:0 0">System</span>
    <span class="t" id="cw7" style="left:453.6px;top:221.6px;font-size:50px;letter-spacing:1.09px;color:#fff;transform:scaleX(1.09);transform-origin:0 0">for</span>
    <span class="t" id="cw8" style="left:533.1px;top:221.6px;font-size:50px;letter-spacing:1.42px;color:#fff;transform:scaleX(1.09);transform-origin:0 0">Growth</span>
    <span class="t" id="c3" style="left:.5px;width:841px;text-align:center;top:323px;font-size:22.500px;letter-spacing:.14px;color:#fff">John Jason</span>
  </div>
</div>
<div class="abs" id="sideTop"></div>
<div class="abs" id="scroll"></div>
<div class="abs" id="sborder"></div>

<!-- ============ SIDEBAR ============ -->

<!-- scrollbar -->
<svg style="left:924px;top:143px" width="13" height="10" viewBox="0 0 13 10"><path d="M6.500 1.300L11.700 8.600H1.300z" fill="#8a8a8a" stroke="#8a8a8a" stroke-width="1.600" stroke-linejoin="round"/></svg>
<div class="abs" style="left:925px;top:161px;width:11px;height:25px;border-radius:5.500px;background:#8e8e8e"></div>
<svg style="left:924px;top:867px" width="13" height="10" viewBox="0 0 13 10"><path d="M6.500 8.700L11.700 1.400H1.300z" fill="#8a8a8a" stroke="#8a8a8a" stroke-width="1.600" stroke-linejoin="round"/></svg>

<!-- sidebar tabs -->
<span class="t" id="tEbook" style="left:959.6px;top:159.7px;letter-spacing:.25px">eBook</span>
<span class="t" id="tBlock" style="left:1044.5px;top:159.7px;letter-spacing:.14px">Block</span>
<svg class="ic" style="left:1245px;top:152.800px" viewBox="0 0 24 24"><path d="M12 13.060l3.712 3.713 1.061-1.060L13.061 12l3.712-3.712-1.060-1.060L12 10.938 8.288 7.227l-1.061 1.060L10.939 12l-3.712 3.712 1.060 1.061L12 13.061z"/></svg>
<div class="abs" style="left:940px;top:196px;width:350px;height:1px;background:#e0e0e0"></div>
<div class="abs" style="left:1024px;top:194.500px;width:77px;height:2.500px;background:#523e6d"></div>

<!-- block card -->
<svg class="ic" style="left:959.750px;top:217px" viewBox="0 0 24 24"><path d="m9.996 14v-.225l.004 0v6.225h1.500v-14.500h2.500v14.500h1.500v-14.500h3v-1.500h-8.504c-2.761 0-5 2.239-5 5 0 2.761 2.239 5 5 5z"/></svg>
<span class="t" id="tPara" style="left:1005px;top:225.9px;-webkit-text-stroke:.5px #1e1e1e;letter-spacing:.27px">Paragraph</span>
<span class="t" id="tDesc1" style="left:1004.4px;top:256.8px;letter-spacing:.41px">Start with the basic building block of</span>
<span class="t" id="tDesc2" style="left:1004.4px;top:279.5px;letter-spacing:.41px">all narrative.</span>

<!-- settings/styles tabs -->
<svg class="ic" style="left:1013px;top:333px;fill:#000" viewBox="0 0 24 24"><path fill-rule="evenodd" clip-rule="evenodd" d="M10.289 4.836A1 1 0 0111.275 4h1.306a1 1 0 01.987.836l.244 1.466c.787.260 1.503.679 2.108 1.218l1.393-.522a1 1 0 011.216.437l.653 1.130a1 1 0 01-.230 1.273l-1.148.944a6.025 6.025 0 010 2.435l1.149.946a1 1 0 01.230 1.272l-.653 1.130a1 1 0 01-1.216.437l-1.394-.522c-.605.540-1.320.958-2.108 1.218l-.244 1.466a1 1 0 01-.987.836h-1.306a1 1 0 01-.986-.836l-.244-1.466a5.995 5.995 0 01-2.108-1.218l-1.394.522a1 1 0 01-1.217-.436l-.653-1.131a1 1 0 01.230-1.272l1.149-.946a6.026 6.026 0 010-2.435l-1.148-.944a1 1 0 01-.230-1.272l.653-1.131a1 1 0 011.217-.437l1.393.522a5.994 5.994 0 012.108-1.218l.244-1.466zM14.929 12a3 3 0 11-6 0 3 3 0 016 0z"/></svg>
<svg class="ic" style="left:1187.800px;top:333px;fill:#000" viewBox="0 0 24 24"><path fill-rule="evenodd" clip-rule="evenodd" d="M20 12a8 8 0 1 1-16 0 8 8 0 0 1 16 0Zm-1.500 0a6.500 6.500 0 0 1-6.500 6.500v-13a6.500 6.500 0 0 1 6.500 6.500Z"/></svg>
<div class="abs" style="left:940px;top:376px;width:350px;height:1px;background:#e0e0e0"></div>
<div class="abs" style="left:940px;top:375.500px;width:175px;height:2.500px;background:#523e6d"></div>

<!-- panels -->
<span class="t" id="tVis" style="left:960.6px;top:401.8px;-webkit-text-stroke:.5px #1e1e1e;letter-spacing:.48px">Visibility</span>
<svg class="ic" style="left:1239.500px;top:393.800px" viewBox="0 0 24 24"><path d="M11 12.500V17.500H12.500V12.500H17.500V11H12.500V6H11V11H6V12.500H11Z"/></svg>
<div class="abs" style="left:940px;top:439px;width:350px;height:1px;background:#e0e0e0"></div>
<span class="t" id="tAdv" style="left:960.6px;top:464.8px;-webkit-text-stroke:.5px #1e1e1e;letter-spacing:.32px">Advanced</span>
<svg class="ic" style="left:1239.400px;top:455.500px" viewBox="0 0 24 24"><path d="M17.500 11.600L12 16l-5.500-4.400.9-1.200L12 14l4.500-3.600 1 1.200z"/></svg>

<!-- ============ BOTTOM ============ -->
<div class="abs" id="bottom"></div>
<div class="abs" id="bline"></div>
<div class="abs" id="btop"></div>

<span class="t" id="b1" style="left:32px;top:890.8px;letter-spacing:.03px">eBook</span>
<svg style="left:92.6px;top:892.4px" width="9" height="12" viewBox="0 0 9 12"><path d="M2.300 2.200L5.900 6L2.300 9.800" fill="none" stroke="#1e1e1e" stroke-width="1.900"/></svg>
<span class="t" id="b2" style="left:117.4px;top:890.8px;letter-spacing:.18px">Book Section</span>
<svg style="left:226.8px;top:892.4px" width="9" height="12" viewBox="0 0 9 12"><path d="M2.300 2.200L5.900 6L2.300 9.800" fill="none" stroke="#1e1e1e" stroke-width="1.900"/></svg>
<span class="t" id="b3" style="left:251.6px;top:890.8px;letter-spacing:.12px">eBook Chapter</span>
<svg style="left:372.3px;top:892.4px" width="9" height="12" viewBox="0 0 9 12"><path d="M2.300 2.200L5.900 6L2.300 9.800" fill="none" stroke="#1e1e1e" stroke-width="1.900"/></svg>
<span class="t" id="b4" style="left:397.2px;top:891.9px;letter-spacing:.08px">Paragraph</span>

</body>
</html>
